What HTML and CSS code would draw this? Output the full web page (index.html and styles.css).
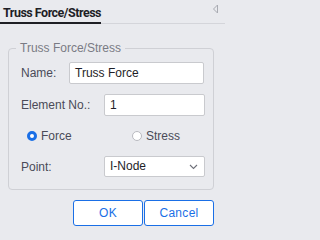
FILE: index.html
```html
<!DOCTYPE html>
<html>
<head>
<meta charset="utf-8">
<link rel="stylesheet" href="styles.css">
</head>
<body>
<div class="panel">
  <div class="tabbar">
    <div class="tab">Truss Force/Stress</div>
    <div class="tabfill"></div>
    <svg class="collapse" width="7" height="10" viewBox="0 0 7 10"><path d="M5.5 1 L1.5 5 L5.5 9 Z" fill="none" stroke="#a9abb2" stroke-width="1"/></svg>
  </div>
  <fieldset class="group">
    <legend class="legend">Truss Force/Stress</legend>
    <div class="rows">
      <div class="row">
        <span class="label">Name:</span>
        <div class="input wide">Truss Force</div>
      </div>
      <div class="row r2">
        <span class="label">Element No.:</span>
        <div class="input narrow">1</div>
      </div>
      <div class="row radios">
        <span class="radio"><span class="dot on"></span><span class="rtext">Force</span></span>
        <span class="radio second"><span class="dot"></span><span class="rtext">Stress</span></span>
      </div>
      <div class="row r4">
        <span class="label">Point:</span>
        <div class="input narrow select">I-Node
          <svg class="chev" width="9" height="6" viewBox="0 0 9 6"><path d="M1 1 L4.5 4.5 L8 1" fill="none" stroke="#6f717a" stroke-width="1.1"/></svg>
        </div>
      </div>
    </div>
  </fieldset>
  <div class="buttons">
    <button class="btn">OK</button>
    <button class="btn">Cancel</button>
  </div>
</div>
</body>
</html>
```
FILE: styles.css
```css
html, body {
  margin: 0;
  padding: 0;
  background: #e9eaee;
}
body {
  font-family: "Liberation Sans", Arial, sans-serif;
  font-size: 12px;
  color: #4a4a58;
  width: 225px;
  height: 238px;
  overflow: hidden;
}
.tabbar {
  display: flex;
  align-items: flex-end;
  height: 24px;
  position: relative;
}
.tab {
  width: 101px;
  height: 22px;
  box-sizing: border-box;
  border-bottom: 2px solid #1f1f24;
  font-family: Roboto, "Liberation Sans", sans-serif;
  font-weight: bold;
  font-size: 12.5px;
  color: #1e1e26;
  padding: 4px 0 0 3px;
  letter-spacing: -0.5px;
  line-height: 14px;
  white-space: nowrap;
}
.tabfill {
  flex: 1;
  border-bottom: 1px solid #d4d5da;
}
.collapse {
  position: absolute;
  right: 6px;
  top: 4px;
}
.group {
  margin: 17px 0 0 8px;
  width: 206px;
  box-sizing: border-box;
  border: 1px solid #cfd0d5;
  border-radius: 4px;
  padding: 0;
}
.legend {
  margin-left: 7px;
  padding: 0 4px;
  color: #7a7b84;
  line-height: 14px;
  font-size: 12px;
}
.rows {
  padding: 7px 0 12px 12px;
  display: flex;
  flex-direction: column;
}
.row {
  display: flex;
  align-items: center;
}
.label {
  color: #4a4a58;
}
.r2 { margin-top: 10px; }
.r4 { margin-top: 11px; }
.input {
  background: #fff;
  border: 1px solid #c9cace;
  border-radius: 2px;
  box-sizing: border-box;
  height: 22px;
  line-height: 20px;
  padding-left: 5px;
  color: #1e1e28;
  position: relative;
}
.wide {
  margin-left: auto;
  margin-right: 9px;
  width: 135px;
}
.narrow {
  margin-left: auto;
  margin-right: 8px;
  width: 101px;
}
.select {
  height: 21px;
  line-height: 19px;
  padding-left: 5px;
}
.chev {
  position: absolute;
  right: 6px;
  top: 7px;
}
.radios {
  margin-top: 10px;
  height: 19px;
  padding-left: 6px;
}
.radio {
  display: flex;
  align-items: center;
}
.second {
  margin-left: auto;
  margin-right: 33px;
}
.dot {
  width: 10px;
  height: 10px;
  box-sizing: border-box;
  border-radius: 50%;
  border: 1px solid #b9bac0;
  background: #fff;
  margin-right: 4px;
}
.dot.on {
  border: 3px solid #1a6fe6;
  background: #fff;
}
.rtext {
  color: #4a4a58;
}
.buttons {
  display: flex;
  justify-content: flex-end;
  gap: 1px;
  padding-right: 11px;
  margin-top: 10px;
}
.btn {
  width: 70px;
  height: 26px;
  background: #fff;
  border: 1px solid #1a6fe6;
  border-radius: 3px;
  color: #1a6fe6;
  font-family: "Liberation Sans", Arial, sans-serif;
  font-size: 12px;
  padding: 0;
  letter-spacing: 0.3px;
}
```
